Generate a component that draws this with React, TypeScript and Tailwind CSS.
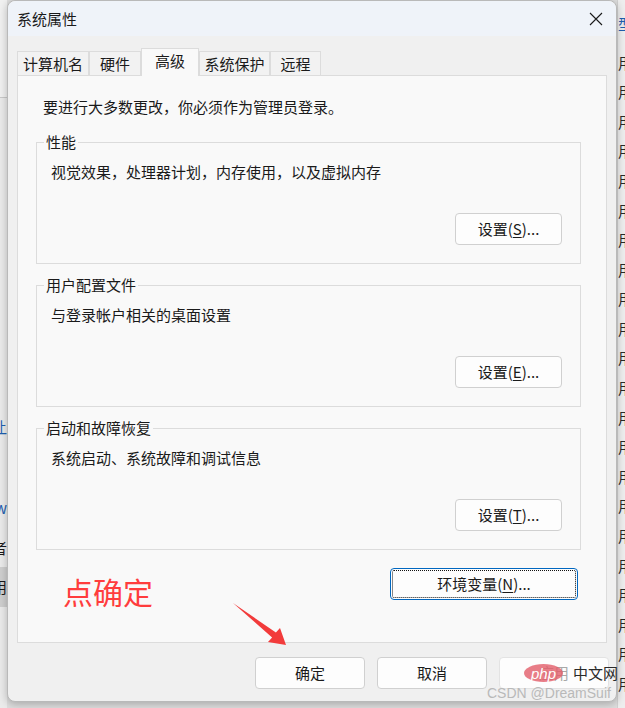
import type { ReactNode } from "react";

const tabs = [
  { label: "计算机名", w: "w-[72px]" },
  { label: "硬件", w: "w-[52px]" },
  { label: "高级", w: "w-[58px]", active: true },
  { label: "系统保护", w: "w-[71px]" },
  { label: "远程", w: "w-[51px]" },
];

function Btn({ children, className = "" }: { children: ReactNode; className?: string }) {
  return (
    <button className={`flex h-[32px] items-center justify-center rounded-[4px] border border-[#d0d0d0] bg-[#fdfdfd] leading-[20px] ${className}`}>
      {children}
    </button>
  );
}

function Group({ title, desc, hot }: { title: string; desc: string; hot: string }) {
  return (
    <fieldset className="ml-[18px] mr-[25px] h-[132px] min-w-0 border border-[#dcdcdc] p-0">
      <legend className="ml-[7px] px-[2px] leading-[20px]">{title}</legend>
      <p className="mt-[10px] pl-[14px] leading-[20px]">{desc}</p>
      <div className="mt-[31px] flex justify-end pr-[18px]">
        <Btn className="w-[107px]">
          设置(<span className="underline underline-offset-2">{hot}</span>)...
        </Btn>
      </div>
    </fieldset>
  );
}

function LeftStrip() {
  return (
    <div className="flex w-[7px] shrink-0 flex-col overflow-hidden bg-[#ebebeb] text-[15px] leading-[20px]">
      <div className="h-[98px] shrink-0 border-b border-[#c9c9c9] bg-[#f1f1f1]" />
      <div className="h-[319px] shrink-0" />
      <div className="flex h-[20px] shrink-0 justify-end whitespace-nowrap text-[#1f5fb0]">让</div>
      <div className="h-[61px] shrink-0" />
      <div className="flex h-[20px] shrink-0 justify-end whitespace-nowrap text-[#1f5fb0]">w</div>
      <div className="h-[20px] shrink-0" />
      <div className="flex h-[20px] shrink-0 justify-end whitespace-nowrap">者</div>
      <div className="h-[9px] shrink-0" />
      <div className="flex h-[40px] shrink-0 items-center justify-end whitespace-nowrap bg-[#cfcfcf]">用</div>
      <div className="flex-1" />
    </div>
  );
}

function RightStrip() {
  const rows = Array.from({ length: 22 }, (_, i) => i);
  return (
    <div className="flex flex-1 flex-col overflow-hidden border-l border-[#d2d2d2] bg-[#eeeeee] text-[15px] text-[#2a2a2a]">
      <div className="h-[14px] shrink-0" />
      <div className="h-[20px] shrink-0 leading-[20px] text-[#1f5fb0]">型</div>
      <div className="h-[14px] shrink-0" />
      {rows.map((i) => (
        <div key={i} className="flex h-[29.6px] shrink-0 items-center whitespace-nowrap">
          用
        </div>
      ))}
    </div>
  );
}

export default function App() {
  return (
    <div className="relative flex h-[708px] w-[625px] overflow-hidden bg-[#dedede] font-['Noto_Sans_CJK_SC','Noto_Sans',sans-serif] text-[15px] text-[#1a1a1a]">
      <LeftStrip />

      <div className="relative z-10 flex h-[702px] w-[610px] shrink-0 flex-col rounded-[8px] border border-[#b9b9b9] bg-[#f0f0f0] shadow-[0_2px_8px_rgba(0,0,0,0.25)]">
        <header className="flex h-[35px] items-center justify-between rounded-t-[8px] bg-[#eff3f9] pl-[9px] pr-[13px]">
          <span className="leading-[20px]">系统属性</span>
          <svg width="14" height="14" viewBox="0 0 14 14" className="text-[#1a1a1a]">
            <path d="M1 1L13 13M13 1L1 13" stroke="currentColor" strokeWidth="1.1" fill="none" />
          </svg>
        </header>

        <div className="flex flex-1 flex-col px-[9px]">
          <div className="relative z-10 -mb-px mt-[12px] flex h-[28px] items-end">
            {tabs.map((t) =>
              t.active ? (
                <div
                  key={t.label}
                  className={`${t.w} flex h-[28px] items-start justify-center border border-b-0 border-[#dcdcdc] bg-[#f9f9f9] pt-[2px] leading-[20px]`}
                >
                  {t.label}
                </div>
              ) : (
                <div
                  key={t.label}
                  className={`${t.w} mb-px flex h-[24px] items-center justify-center border border-b-0 border-[#dcdcdc] bg-[#f2f2f2] pt-[1px] leading-[20px]`}
                >
                  {t.label}
                </div>
              )
            )}
          </div>

          <div className="flex h-[568px] flex-col border border-[#dcdcdc] bg-[#f9f9f9]">
            <p className="mt-[21px] pl-[25px] leading-[20px]">要进行大多数更改，你必须作为管理员登录。</p>
            <div className="mt-[15px] flex flex-col gap-[11px]">
              <Group title="性能" desc="视觉效果，处理器计划，内存使用，以及虚拟内存" hot="S" />
              <Group title="用户配置文件" desc="与登录帐户相关的桌面设置" hot="E" />
              <Group title="启动和故障恢复" desc="系统启动、系统故障和调试信息" hot="T" />
            </div>
            <div className="mr-[28px] mt-[18px] flex justify-end">
              <button className="flex h-[32px] w-[188px] items-center justify-center rounded-[4px] border border-[#0067c0] bg-[#fdfdfd] leading-[20px] outline-1 outline-offset-[-3px] outline-dotted outline-[#111]">
                环境变量(<span className="underline underline-offset-2">N</span>)...
              </button>
            </div>
          </div>

          <div className="mt-[14px] flex justify-end gap-[12px]">
            <Btn className="w-[110px]">确定</Btn>
            <Btn className="w-[110px]">取消</Btn>
            <Btn className="mr-[-2px] w-[110px] border-[#e3e3e3] bg-[#f6f6f6] text-[#a8a8a8]">应用</Btn>
          </div>
        </div>
      </div>

      <RightStrip />

      {/* annotation */}
      <span className="absolute left-[63px] top-[573px] z-20 text-[30px] leading-[36px] text-[#ff3d3d]">点确定</span>
      <svg className="absolute left-[230px] top-[598px] z-20" width="62" height="52" viewBox="0 0 62 52">
        <path d="M3 5 L45.9 34.6 L50 30 L56 47 L38 44 L42.1 39.4 Z" fill="#f23b3b" />
      </svg>

      {/* watermark */}
      <div className="absolute left-[524px] top-[664px] z-20 flex items-center gap-[10px]">
        <span className="flex h-[18px] w-[39px] items-center justify-center rounded-[50%] bg-[#e25c69]/80 font-['Liberation_Sans',sans-serif] text-[15px] italic leading-none text-white">
          php
        </span>
        <span className="text-[15px] leading-[18px] text-[#2a2a2a]">中文网</span>
      </div>
      <span className="absolute left-[487px] top-[685px] z-20 font-['Liberation_Sans',sans-serif] text-[14px] leading-[16px] text-[#b9b9b9]">
        CSDN @DreamSuif
      </span>
    </div>
  );
}
